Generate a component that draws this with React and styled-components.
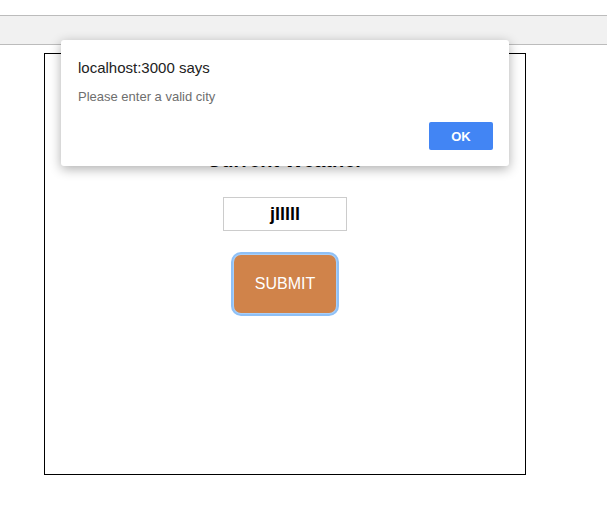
import styled, { createGlobalStyle } from "styled-components";

const GlobalStyle = createGlobalStyle`
  body {
    margin: 0;
    background: #fff;
    font-family: "Liberation Sans", Arial, sans-serif;
  }
`;

const Page = styled.div`
  position: relative;
  width: 607px;
  height: 531px;
  overflow: hidden;
`;

const TabStrip = styled.div`
  margin-top: 15px;
  height: 28px;
  background: #f1f1f1;
  border-top: 1px solid #bcbcbc;
  border-bottom: 1px solid #bcbcbc;
`;

const Card = styled.div`
  margin: 8px 0 0 44px;
  width: 482px;
  height: 422px;
  box-sizing: border-box;
  border: 1px solid #000;
  display: flex;
  flex-direction: column;
  align-items: center;
  padding-top: 95px;
`;

const Heading = styled.h2`
  margin: 0;
  font-size: 20px;
  font-weight: bold;
  line-height: 23px;
  color: #000;
`;

const CityInput = styled.input`
  margin-top: 25px;
  width: 124px;
  height: 34px;
  box-sizing: border-box;
  border: 1px solid #cccccc;
  text-align: center;
  font-family: "Liberation Sans", Arial, sans-serif;
  font-size: 18px;
  font-weight: bold;
  color: #000;
  outline: none;
`;

const SubmitButton = styled.button`
  margin-top: 24px;
  width: 102px;
  height: 58px;
  border: none;
  border-radius: 7px;
  background: #d0834a;
  color: #fff;
  font-family: "Liberation Sans", Arial, sans-serif;
  font-size: 16px;
  box-shadow: 0 0 0 1px #a9d0fa, 0 0 0 3px #8fc0f6;
  outline: none;
`;

const Dialog = styled.div`
  position: absolute;
  left: 61px;
  top: 40px;
  width: 448px;
  height: 126px;
  box-sizing: border-box;
  padding: 19px 16px 16px 17px;
  background: #fff;
  border-radius: 3px;
  box-shadow: 0 3px 12px rgba(0, 0, 0, 0.32);
  display: flex;
  flex-direction: column;
`;

const Title = styled.div`
  font-size: 15px;
  line-height: 18px;
  color: #222;
`;

const Message = styled.div`
  margin-top: 12px;
  font-size: 13px;
  line-height: 16px;
  color: #6e6e6e;
`;

const Actions = styled.div`
  margin-top: auto;
  display: flex;
  justify-content: flex-end;
`;

const OkButton = styled.button`
  width: 64px;
  height: 28px;
  border: none;
  border-radius: 2px;
  background: #4285f4;
  color: #fff;
  font-family: "Liberation Sans", Arial, sans-serif;
  font-size: 13px;
  font-weight: bold;
`;

const App = () => {
  return (
    <Page>
      <GlobalStyle />
      <TabStrip />
      <Card>
        <Heading>Current Weather</Heading>
        <CityInput defaultValue="jlllll" />
        <SubmitButton>SUBMIT</SubmitButton>
      </Card>
      <Dialog>
        <Title>localhost:3000 says</Title>
        <Message>Please enter a valid city</Message>
        <Actions>
          <OkButton>OK</OkButton>
        </Actions>
      </Dialog>
    </Page>
  );
};

export default App;
